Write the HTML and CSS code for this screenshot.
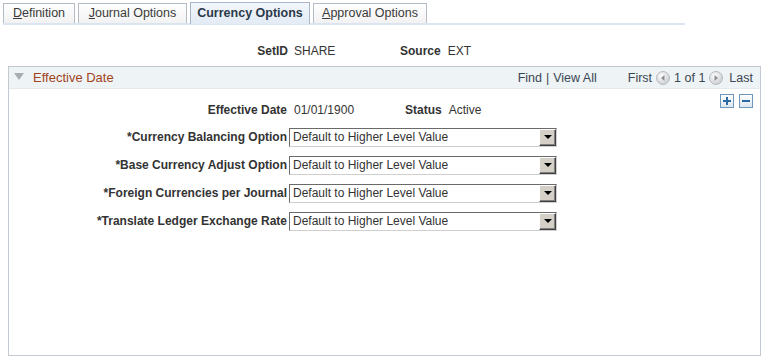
FILE: index.html
```
<!DOCTYPE html>
<html>
<head>
<meta charset="utf-8">
<link rel="stylesheet" href="styles.css">
</head>
<body>
<div class="tabs">
  <div class="tab"><u>D</u>efinition</div>
  <div class="tab"><u>J</u>ournal Options</div>
  <div class="tab active">Currency Options</div>
  <div class="tab"><u>A</u>pproval Options</div>
</div>
<div class="keyrow">
  <span class="lbl lbl-main">SetID</span><span class="val val-main">SHARE</span>
  <span class="lbl lbl-2">Source</span><span class="val">EXT</span>
</div>
<div class="box">
  <div class="boxhead">
    <div class="title"><span class="tri"></span>Effective Date</div>
    <div class="nav">
      <span class="link">Find</span><span class="sep">|</span><span class="link">View All</span>
      <span class="first">First</span>
      <svg class="circ" width="14" height="14" viewBox="0 0 14 14"><defs><radialGradient id="g1" cx="0.4" cy="0.35" r="0.7"><stop offset="0" stop-color="#ffffff"/><stop offset="1" stop-color="#c8cacc"/></radialGradient></defs><circle cx="7" cy="7" r="6.5" fill="url(#g1)" stroke="#b8bcc0"/><path d="M8.5 4 L5 7 L8.5 10 Z" fill="#8a8e92"/></svg>
      <span class="count">1 of 1</span>
      <svg class="circ" width="14" height="14" viewBox="0 0 14 14"><circle cx="7" cy="7" r="6.5" fill="url(#g1)" stroke="#b8bcc0"/><path d="M5.5 4 L9 7 L5.5 10 Z" fill="#8a8e92"/></svg>
      <span class="last">Last</span>
    </div>
  </div>
  <div class="addrow">
    <span class="pm"><svg width="10" height="10" viewBox="0 0 10 10"><path d="M4 1h2v3h3v2H6v3H4V6H1V4h3z" fill="#2a6aa6"/></svg></span>
    <span class="pm"><svg width="10" height="10" viewBox="0 0 10 10"><path d="M1 4h8v2H1z" fill="#2a6aa6"/></svg></span>
  </div>
  <div class="effrow">
    <span class="lbl lbl-main">Effective Date</span><span class="val val-eff">01/01/1900</span>
    <span class="lbl lbl-status">Status</span><span class="val">Active</span>
  </div>
  <div class="frow">
    <span class="lbl lbl-main">*Currency Balancing Option</span>
    <div class="sel"><span class="seltext">Default to Higher Level Value</span><span class="arrow"><i></i></span></div>
  </div>
  <div class="frow">
    <span class="lbl lbl-main">*Base Currency Adjust Option</span>
    <div class="sel"><span class="seltext">Default to Higher Level Value</span><span class="arrow"><i></i></span></div>
  </div>
  <div class="frow">
    <span class="lbl lbl-main">*Foreign Currencies per Journal</span>
    <div class="sel"><span class="seltext">Default to Higher Level Value</span><span class="arrow"><i></i></span></div>
  </div>
  <div class="frow">
    <span class="lbl lbl-main">*Translate Ledger Exchange Rate</span>
    <div class="sel"><span class="seltext">Default to Higher Level Value</span><span class="arrow"><i></i></span></div>
  </div>
</div>
</body>
</html>
```
FILE: styles.css
```
* { box-sizing: border-box; }
html, body { margin: 0; padding: 0; background: #fff; }
body {
  font-family: "Liberation Sans", Arial, sans-serif;
  font-size: 12px;
  color: #333;
  width: 761px;
  height: 360px;
  overflow: hidden;
}
.tabs {
  display: flex;
  align-items: flex-end;
  gap: 3px;
  margin-top: 3px;
  margin-left: 3px;
  width: 682px;
  height: 22px;
  border-bottom: 2px solid #dbe5f1;
}
.tab {
  height: 20px;
  padding: 0;
  text-align: center;
  white-space: nowrap;
  line-height: 19px;
  font-size: 12.5px;
  color: #3a3a3a;
  border: 1px solid #b4bcc6;
  border-bottom: none;
  background: linear-gradient(#ffffff, #f2f2f2);
}
.tab u { text-decoration: underline; }
.tab:nth-child(1) { width: 72px; }
.tab:nth-child(2) { width: 109px; }
.tab.active {
  width: 120px;
  height: 22px;
  margin-bottom: -1px;
  line-height: 20px;
  font-weight: bold;
  font-size: 12.5px;
  color: #2b3a4a;
  background: linear-gradient(#f2f6fb, #e3ebf5);
  border-color: #a9b7c8;
}
.tab:nth-child(4) { width: 114px; }
.lbl { font-weight: bold; color: #333; }
.val { color: #333; }
.keyrow {
  display: flex;
  align-items: center;
  height: 16px;
  margin-top: 18px;
}
.keyrow .lbl-main { width: 288px; text-align: right; }
.keyrow .val-main { margin-left: 6px; width: 106px; }
.keyrow .lbl-2 { margin-right: 7px; }
.box {
  margin: 7px 0 0 8px;
  width: 753px;
  height: 290px;
  border: 1px solid #c3c9d0;
}
.boxhead {
  display: flex;
  align-items: center;
  justify-content: space-between;
  height: 22px;
  background: #eef3f5;
  border-bottom: 1px solid #e4e9ec;
}
.title {
  display: flex;
  align-items: center;
  color: #a1441e;
  font-size: 13px;
  padding-left: 5px;
}
.tri {
  width: 0; height: 0;
  border-left: 5px solid transparent;
  border-right: 5px solid transparent;
  border-top: 7px solid #a8adb2;
  margin-right: 9px;
  margin-top: -2px;
}
.nav {
  display: flex;
  align-items: center;
  font-size: 12.5px;
  color: #3a4654;
  padding-right: 7px;
}
.sep { margin: 0 4px; }
.first { margin-left: 31px; margin-right: 4px; }
.circ { display: block; }
.count { margin: 0 4px; }
.last { margin-left: 6px; }
.addrow {
  display: flex;
  justify-content: flex-end;
  gap: 5px;
  padding-right: 7px;
  margin-top: 5px;
  height: 14px;
}
.pm {
  width: 14px; height: 14px;
  border: 1px solid #6f96bd;
  background: linear-gradient(#ffffff, #dde6ef);
  display: flex; align-items: center; justify-content: center;
}
.pm svg { display: block; }
.effrow {
  display: flex;
  align-items: center;
  height: 16px;
  margin-top: -6px;
}
.effrow .lbl-main { width: 278px; text-align: right; }
.effrow .val-eff { margin-left: 7px; width: 111px; }
.effrow .lbl-status { margin-right: 7px; }
.frow {
  display: flex;
  align-items: center;
  height: 18px;
  margin-top: 10px;
}
.effrow + .frow { margin-top: 10px; }
.frow .lbl-main { width: 278px; text-align: right; margin-right: 2px; }
.sel {
  display: flex;
  align-items: stretch;
  width: 268px;
  height: 19px;
  border: 1px solid #6a6a6a;
  border-right-color: #cfcfcf;
  border-bottom-color: #cfcfcf;
  background: #fff;
}
.seltext {
  flex: 1;
  padding-left: 3px;
  line-height: 17px;
  color: #333;
  font-size: 12px;
}
.arrow {
  width: 17px;
  background: #d4d0c8;
  border-top: 1px solid #fff;
  border-left: 1px solid #fff;
  border-right: 1px solid #404040;
  border-bottom: 1px solid #404040;
  box-shadow: inset -1px -1px 0 #808080;
  display: flex;
  align-items: center;
  justify-content: center;
}
.arrow i {
  width: 0; height: 0;
  border-left: 4px solid transparent;
  border-right: 4px solid transparent;
  border-top: 4px solid #000;
}
```
